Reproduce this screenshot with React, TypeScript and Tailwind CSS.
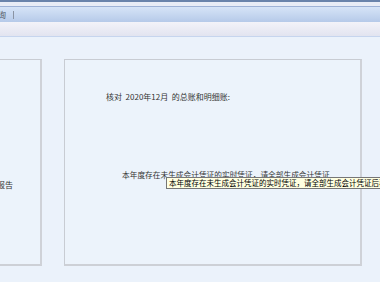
import React from 'react';

const cjk = { fontFamily: '"Noto Sans CJK SC", "Noto Sans", sans-serif' };

export default function App() {
  return (
    <div className="relative w-[380px] h-[282px] overflow-hidden bg-[#ebf2fb] text-[8px] leading-[10px]" style={cjk}>
      {/* window chrome */}
      <div className="h-[2px] bg-[#6a84ab]" />
      <div className="h-[4px] bg-[#e9edf6]" />
      <div className="h-[1px] bg-[#9fb3d6]" />
      <div className="h-[15px] bg-gradient-to-b from-[#d6e4f7] to-[#b6cae9] flex items-center">
        <span className="-ml-[2px] text-[#555b66] text-[8px]">询</span>
        <span className="ml-[7px] w-px h-[8px] bg-[#8a93a3]" />
      </div>
      <div className="h-[14px] bg-gradient-to-b from-[#f3f3f9] to-[#e2e4f0]" />
      <div className="h-[1px] bg-[#c6d5ee]" />

      {/* body */}
      <div className="pt-[22px] flex gap-[22px]">
        {/* left panel */}
        <div className="w-[42px] h-[207px] border-t border-[#c8ccd3] border-r-2 border-r-[#cfd2d8] border-b-2 border-b-[#cdd0d6] bg-[#ecf3fb] flex flex-col">
          <div className="h-[120px]" />
          <div className="-ml-[3px] text-[#333]">报告</div>
        </div>

        {/* right panel */}
        <div className="w-[298px] h-[207px] border-t border-l border-[#c8ccd3] border-r-2 border-r-[#cfd2d8] border-b-2 border-b-[#cdd0d6] bg-[#ecf3fb] flex flex-col">
          <div className="pt-[32px] pl-[41px] text-[#333] whitespace-nowrap">
            核对&nbsp;&nbsp;2020年12月&nbsp;&nbsp;的总账和明细账:
          </div>
          <div className="mt-[68px] pl-[57px] text-[#333] whitespace-nowrap text-[7.7px]">
            本年度存在未生成会计凭证的实时凭证，请全部生成会计凭证
          </div>
        </div>
      </div>

      {/* tooltip */}
      <div className="absolute left-[166px] top-[177px] h-[12px] pl-[2px] pr-[4px] border border-[#767676] bg-[#ffffe1] text-black text-[7.5px] leading-[10px] whitespace-nowrap">
        本年度存在未生成会计凭证的实时凭证，请全部生成会计凭证后再进行对账
      </div>
    </div>
  );
}
